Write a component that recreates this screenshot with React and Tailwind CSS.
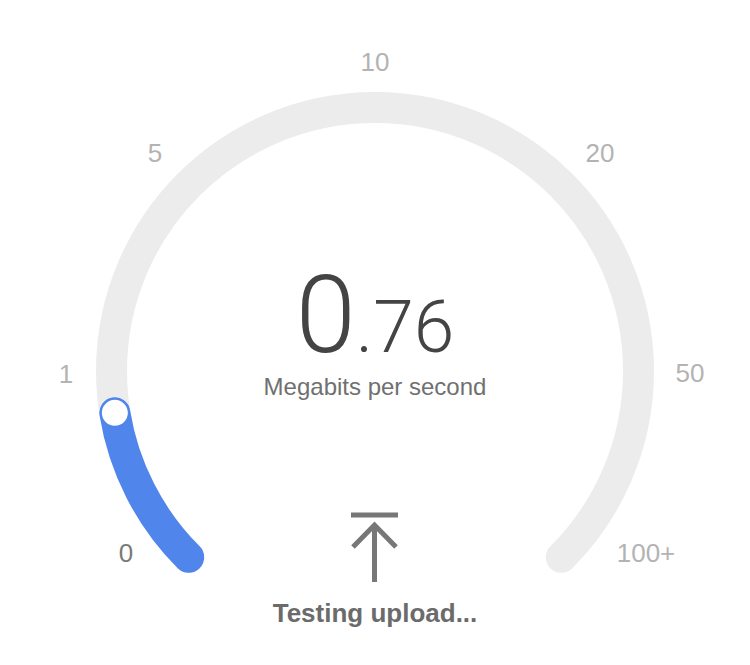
import React from "react";

const CX = 375;
const CY = 371;
const R = 263.5;

const pt = (deg) => {
  const a = (deg * Math.PI) / 180;
  return [CX + R * Math.cos(a), CY + R * Math.sin(a)];
};

const labels = [
  { text: "0", x: 126, y: 553, cls: "text-[#7a7a7a]" },
  { text: "1", x: 66, y: 374, cls: "text-[#b3b3b3]" },
  { text: "5", x: 155, y: 153, cls: "text-[#b3b3b3]" },
  { text: "10", x: 375, y: 62, cls: "text-[#b3b3b3]" },
  { text: "20", x: 600, y: 153, cls: "text-[#b3b3b3]" },
  { text: "50", x: 690, y: 373, cls: "text-[#b3b3b3]" },
  { text: "100+", x: 646, y: 553, cls: "text-[#b3b3b3]" },
];

export default function App() {
  const [sx, sy] = pt(135);
  const [ex, ey] = pt(45);
  const [kx, ky] = pt(170.86);

  return (
    <div className="relative w-[750px] h-[665px] bg-white overflow-hidden font-['Liberation_Sans',Arial,sans-serif]">
      {/* dial */}
      <svg className="absolute inset-0" width="750" height="665" viewBox="0 0 750 665">
        <path
          d={`M${sx} ${sy} A${R} ${R} 0 1 1 ${ex} ${ey}`}
          fill="none"
          stroke="#ececec"
          strokeWidth="31"
          strokeLinecap="round"
        />
        <path
          d={`M${sx} ${sy} A${R} ${R} 0 0 1 ${kx} ${ky}`}
          fill="none"
          stroke="#5085ec"
          strokeWidth="31"
          strokeLinecap="round"
        />
        <circle cx={kx} cy={ky} r="14" fill="#fff" stroke="#5085ec" strokeWidth="2" />
      </svg>

      {labels.map((l) => (
        <span
          key={l.text}
          className={`absolute -translate-x-1/2 -translate-y-1/2 text-[26px] leading-none ${l.cls}`}
          style={{ left: l.x, top: l.y }}
        >
          {l.text}
        </span>
      ))}

      {/* readout */}
      <div className="relative flex flex-col items-center pt-[261px]">
        <div className="flex items-baseline h-[108px] leading-none text-[#444] font-['Roboto',sans-serif] font-light">
          <span className="text-[108px] leading-none">0</span>
          <span className="text-[73px] leading-none">.76</span>
        </div>
        <p className="mt-[6px] text-[24px] leading-none text-[#707070]">Megabits per second</p>

        <svg className="mt-[111px]" width="50" height="75" viewBox="0 0 50 75">
          <g stroke="#777" strokeWidth="5" fill="none">
            <path d="M1 5H48" />
            <path d="M24.5 14V72" />
            <path d="M3 37L24.5 15L46 37" />
          </g>
        </svg>

        <p className="mt-[15px] text-[26px] leading-none font-bold text-[#6b6b6b]">Testing upload...</p>
      </div>
    </div>
  );
}
